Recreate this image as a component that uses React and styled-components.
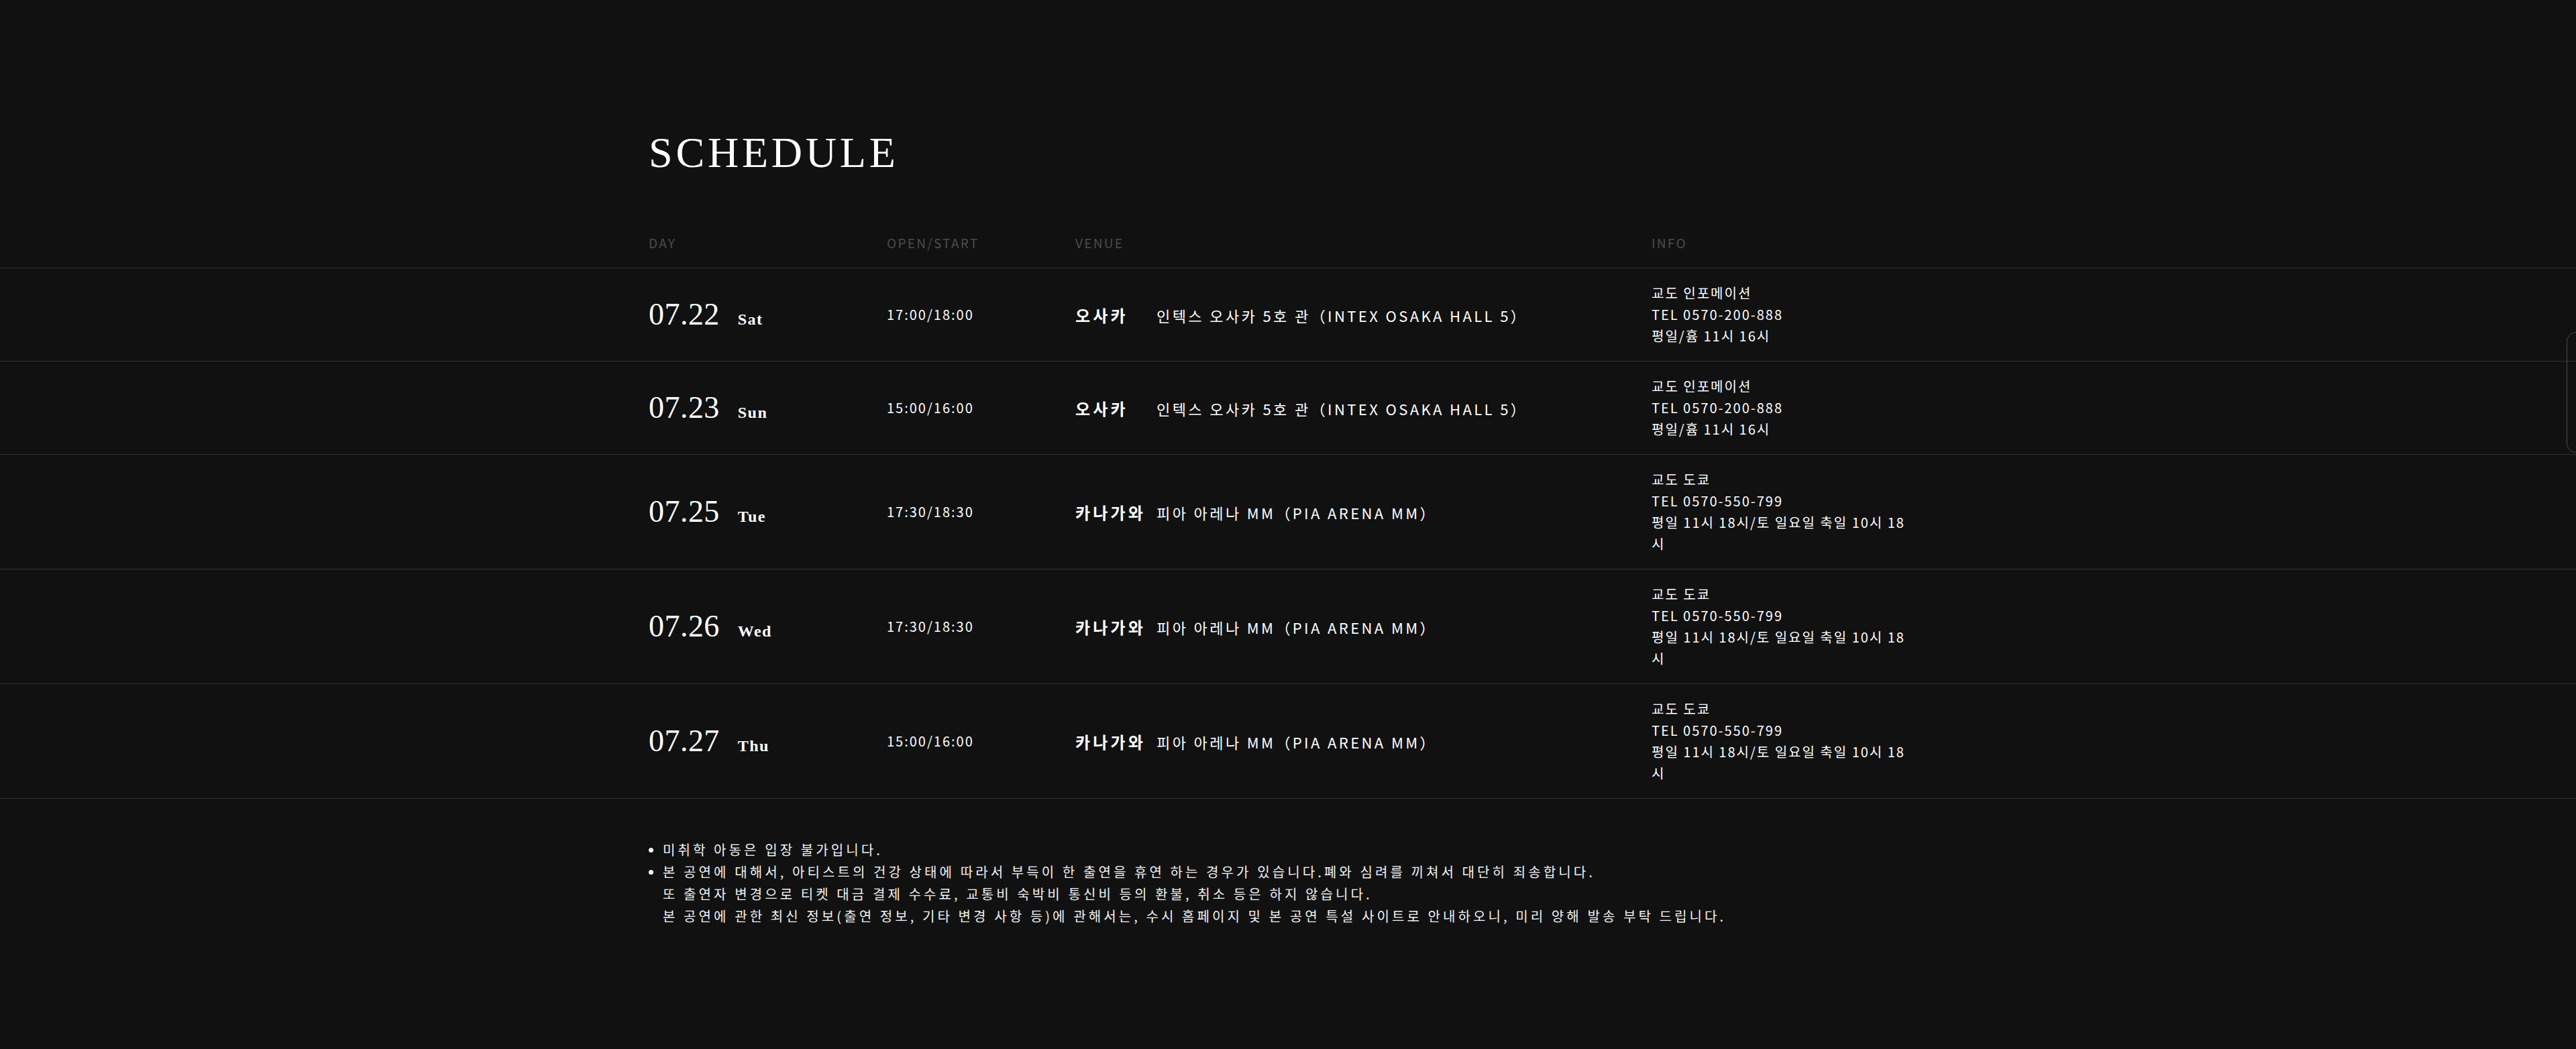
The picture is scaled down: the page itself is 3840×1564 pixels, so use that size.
import React from 'react'
import styled, { createGlobalStyle } from 'styled-components'

const GlobalStyle = createGlobalStyle`
html, body {
  margin: 0;
  padding: 0;
  background: #111111;
  color: #fff;
  font-family: "Noto Sans CJK KR", "Noto Sans", sans-serif;
}
`

const Section = styled.section`
width: 100%;
min-height: 1564px;
padding-top: 196px;
box-sizing: border-box;
`

const Inner = styled.div`
width: 1906px;
margin: 0 auto;
`

const Title = styled.h2`
margin: 0;
font-family: "Liberation Serif", "DejaVu Serif", serif;
font-weight: 400;
font-size: 64px;
line-height: 1;
letter-spacing: 0.075em;
color: #fff;
`

const Grid = styled.div`
display: grid;
grid-template-columns: 355px 281px 859px 411px;
align-items: center;
`

const HeadRow = styled.div`
margin-top: 88px;
padding-bottom: 23px;
border-bottom: 1px solid #303030;
`

const HeadCell = styled.div`
font-size: 19px;
line-height: 28px;
letter-spacing: 0.12em;
color: #4c4c4c;
`

const Row = styled.div`
border-bottom: 1px solid #303030;
padding: 21px 0;
`

const DayCell = styled.div`
display: flex;
align-items: baseline;
font-family: "Liberation Serif", "DejaVu Serif", serif;
`

const DateNum = styled.span`
font-size: 46px;
line-height: 1;
letter-spacing: 0.01em;
`

const Weekday = styled.span`
margin-left: 27px;
font-size: 24px;
font-weight: 700;
letter-spacing: 0.06em;
`

const Time = styled.div`
font-size: 20px;
line-height: 1;
letter-spacing: 0.1em;
`

const Venue = styled.div`
display: flex;
align-items: baseline;
`

const City = styled.span`
width: 121px;
flex: none;
font-size: 24px;
font-weight: 700;
letter-spacing: 4.2px;
`

const Place = styled.span`
font-size: 22px;
letter-spacing: 3.4px;
`

const Info = styled.div`
width: 388px;
font-size: 20px;
line-height: 32px;
letter-spacing: 0.1em;
word-break: break-all;
`

const Notes = styled.ul`
list-style: none;
margin: 59px 0 0;
padding: 0;
`

const Note = styled.li`
position: relative;
padding-left: 21px;
font-size: 20px;
line-height: 33px;
letter-spacing: 4.1px;
color: #f2f2f2;
&::before {
  content: "";
  position: absolute;
  left: 0;
  top: 14px;
  width: 7px;
  height: 7px;
  border-radius: 50%;
  background: #f2f2f2;
}
`

const ScrollThumb = styled.div`
position: fixed;
top: 495px;
right: -14px;
width: 26px;
height: 178px;
border: 1px solid #4a4a4a;
border-radius: 14px;
`

const tokyo = ['교도 도쿄', 'TEL 0570-550-799', '평일 11시 18시/토 일요일 축일 10시 18시']
const info = ['교도 인포메이션', 'TEL 0570-200-888', '평일/흄 11시 16시']
const osaka = ['오사카', '인텍스 오사카 5호 관（INTEX OSAKA HALL 5）']
const kanagawa = ['카나가와', '피아 아레나 MM（PIA ARENA MM）']

const shows = [
  { date: '07.22', day: 'Sat', time: '17:00/18:00', venue: osaka, info },
  { date: '07.23', day: 'Sun', time: '15:00/16:00', venue: osaka, info },
  { date: '07.25', day: 'Tue', time: '17:30/18:30', venue: kanagawa, info: tokyo },
  { date: '07.26', day: 'Wed', time: '17:30/18:30', venue: kanagawa, info: tokyo },
  { date: '07.27', day: 'Thu', time: '15:00/16:00', venue: kanagawa, info: tokyo },
]

const App = () => {
  return (
    <>
      <GlobalStyle />
      <Section>
        <Inner>
          <Title>SCHEDULE</Title>
        </Inner>
        <HeadRow>
          <Inner>
            <Grid>
              <HeadCell>DAY</HeadCell>
              <HeadCell>OPEN/START</HeadCell>
              <HeadCell>VENUE</HeadCell>
              <HeadCell>INFO</HeadCell>
            </Grid>
          </Inner>
        </HeadRow>
        {shows.map(({ date, day, time, venue, info }) => (
          <Row key={date}>
            <Inner>
              <Grid>
                <DayCell>
                  <DateNum>{date}</DateNum>
                  <Weekday>{day}</Weekday>
                </DayCell>
                <Time>{time}</Time>
                <Venue>
                  <City>{venue[0]}</City>
                  <Place>{venue[1]}</Place>
                </Venue>
                <Info>
                  {info.map((line) => (
                    <div key={line}>{line}</div>
                  ))}
                </Info>
              </Grid>
            </Inner>
          </Row>
        ))}
        <Inner>
          <Notes>
            <Note>미취학 아동은 입장 불가입니다.</Note>
            <Note>
              본 공연에 대해서, 아티스트의 건강 상태에 따라서 부득이 한 출연을 휴연 하는 경우가 있습니다.폐와 심려를 끼쳐서 대단히 죄송합니다.
              <br />
              또 출연자 변경으로 티켓 대금 결제 수수료, 교통비 숙박비 통신비 등의 환불, 취소 등은 하지 않습니다.
              <br />
              본 공연에 관한 최신 정보(출연 정보, 기타 변경 사항 등)에 관해서는, 수시 홈페이지 및 본 공연 특설 사이트로 안내하오니, 미리 양해 발송 부탁 드립니다.
            </Note>
          </Notes>
        </Inner>
      </Section>
      <ScrollThumb />
    </>
  )
}

export default App
